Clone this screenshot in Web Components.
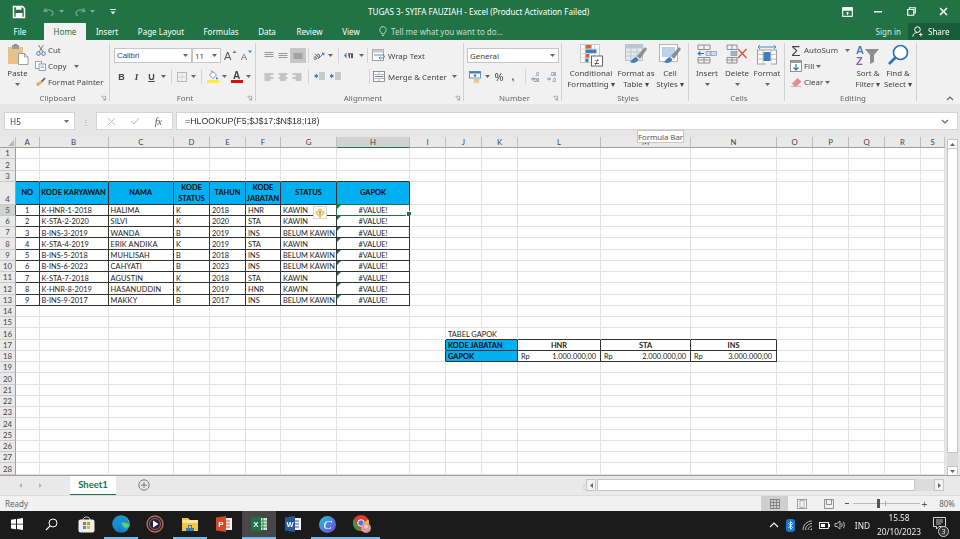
<!DOCTYPE html>
<html><head><meta charset="utf-8"><title>Excel</title>
<style>
html,body{margin:0;padding:0;width:960px;height:539px;overflow:hidden;background:#fff}
</style></head><body>
<x-app></x-app>
<script>
const UI='"Noto Sans","Open Sans",sans-serif';
const I={
save:[14,14,`<path d="M1.5 1.5h9l2 2v9h-11z" fill="none" stroke="#fff" stroke-width="1.5"/><rect x="4" y="1.5" width="5.5" height="3.2" fill="#fff"/><rect x="3.6" y="8" width="6.8" height="4.5" fill="#fff"/>`],
undo:[12,10,`<path d="M3 1L1 4l3.5 1M1.5 4c4-2 8-1 8.5 2 .2 1.500-1 2.500-2 3" fill="none" stroke="#6fa58a" stroke-width="1.3"/>`],
redo:[12,10,`<path d="M9 1l2 3-3.500 1M10.500 4c-4-2-8-1-8.500 2-.2 1.500 1 2.500 2 3" fill="none" stroke="#6fa58a" stroke-width="1.3"/>`],
caretG:[5,3,`<path d="M0 0h5L2.500 3z" fill="#7fb096"/>`],
custom:[6,6,`<rect x="0" y="0" width="6" height="1" fill="#dfeee6"/><path d="M.5 2.500h5L3 5.500z" fill="#dfeee6"/>`],
ribdisp:[11,10,`<rect x=".7" y=".7" width="9.600" height="8.600" fill="none" stroke="#fff" stroke-width="1.100"/><rect x=".7" y=".7" width="9.600" height="3" fill="#fff"/><path d="M5.500 8V5M4 6.500l1.500-1.500L7 6.500" fill="none" stroke="#fff"/>`],
min:[8,2,`<rect width="8" height="1.500" fill="#fff"/>`],
restore:[9,9,`<path d="M2.500 2.500V.7h5.800v5.300H6.700M.7 2.500h6v5.800h-6z" fill="none" stroke="#fff" stroke-width="1.100"/>`],
close:[9,9,`<path d="M1 1l7 7M8 1L1 8" stroke="#fff" stroke-width="1.500"/>`],
bulb:[8,11,`<path d="M4 .6a3.200 3.200 0 0 0-2 5.700c.6.600.6 1 .7 1.700h2.600c.1-.7.1-1.100.7-1.700A3.200 3.200 0 0 0 4 .6zM3 9.500h2" fill="none" stroke="#cfe3d8" stroke-width=".8"/>`],
user:[11,11,`<circle cx="5.500" cy="3.600" r="2.800" fill="none" stroke="#fff" stroke-width="1"/><path d="M.8 10.500c.6-3 2.200-4 4.700-4M7 8.500h3.500M8.700 6.800v3.500" fill="none" stroke="#fff"/>`],
paste:[22,21,`<rect x="1" y="3" width="15" height="17" fill="#e7c38c"/><rect x="5" y="1" width="7" height="4" fill="#9b9b9b"/><rect x="7" y="0" width="3" height="2" fill="#8b8b8b"/><path d="M11.500 9.500h6l3.500 3.500v7.500h-9.500z" fill="#fff" stroke="#8a8a8a" stroke-width=".8"/><path d="M17.500 9.500v3.500H21" fill="none" stroke="#8a8a8a" stroke-width=".8"/>`],
cut:[10,11,`<path d="M2.500 0l4.500 7M7.500 0L3 7" stroke="#7c7c7c" stroke-width="1"/><circle cx="2.500" cy="8.600" r="1.800" fill="none" stroke="#3f7fbf" stroke-width="1"/><circle cx="7.500" cy="8.600" r="1.800" fill="none" stroke="#3f7fbf" stroke-width="1"/>`],
copy:[11,10,`<rect x=".5" y=".5" width="6" height="7" fill="#fff" stroke="#8b8b8b" stroke-width=".8"/><rect x="4" y="3" width="6.500" height="6.500" fill="#fff" stroke="#5b8fc2" stroke-width=".8"/><path d="M5.500 5h3.500M5.500 6.500h3.500" stroke="#7aa4cc" stroke-width=".7"/>`],
brush:[11,10,`<path d="M6 4l3.500-3.500 1 1L7 5.500z" fill="#555"/><path d="M6 3.500L1 6.500l2 3 4.500-4z" fill="#e3b565"/><path d="M2 7l2 1" stroke="#b98a3d" stroke-width=".7"/>`],
caret:[5,3,`<path d="M0 0h5L2.500 3z" fill="#666"/>`],
launch:[5,5,`<path d="M.3.300h4.400v4.400" fill="none" stroke="#8a8a8a" stroke-width=".6"/><path d="M1 1l3 3M2.200 4h1.800V2.200" fill="none" stroke="#8a8a8a" stroke-width=".6"/>`],
growA:[13,11,`<text x="0" y="10" font-size="11" font-family="Liberation Sans" fill="#555">A</text><path d="M8.500 3L10.500.5 12.500 3z" fill="#3f7fbf"/>`],
shrinkA:[12,11,`<text x="1" y="10" font-size="9" font-family="Liberation Sans" fill="#555">A</text><path d="M8 .5h4L10 3z" fill="#3f7fbf"/>`],
border:[10,10,`<rect x=".5" y=".5" width="9" height="9" fill="none" stroke="#b9b9b9"/><path d="M5 .5v9M.5 5h9" stroke="#cfcfcf" stroke-width=".8"/>`],
fill:[12,13,`<path d="M6 1.500L2.500 5 6 8.500 9.500 5z" fill="#fff" stroke="#777" stroke-width=".8"/><path d="M4 .5l2 2" stroke="#555" stroke-width=".8"/><path d="M9.800 6.500c.6 1 1 1.500 1 2a.9.900 0 0 1-1.800 0c0-.5.400-1 .8-2z" fill="#3f7fbf"/><rect x="0" y="10" width="12" height="3" fill="#ffee33"/>`],
fcolor:[12,13,`<text x="2" y="9" font-size="10" font-family="Liberation Sans" font-weight="bold" fill="#444">A</text><rect x="0" y="10" width="12" height="3" fill="#dd0b0b"/>`],
atop:[10,7,`<path d="M.5 1h9M.5 3h9M.5 5h9" stroke="#8c8c8c" stroke-width=".9" transform="translate(0 -.5)"/>`],
amid:[10,7,`<path d="M.5 1.500h9M.5 3.500h9M.5 5.500h9" stroke="#8c8c8c" stroke-width=".9"/>`],
abot:[10,7,`<path d="M.5 2h9M.5 4h9M.5 6h9" stroke="#777" stroke-width=".9"/>`],
orient:[14,11,`<text x="1" y="9" font-size="6.500" font-weight="bold" font-family="Liberation Sans" fill="#666" transform="rotate(-40 4 7)">ab</text><path d="M6 9l5-5" stroke="#3f7fbf" stroke-width="1"/><path d="M9.500 2.500l3 .5-.5 3z" fill="#3f7fbf"/>`],
rtl:[10,7,`<path d="M0 3.500l2.500-3v6z" fill="#3f7fbf"/><path d="M4 1h5v5H7V2H6v4H5z" fill="#555" transform="translate(0 .2)"/>`],
wrap:[14,13,`<rect x=".5" y=".5" width="11" height="11" fill="#fff" stroke="#8b8b8b" stroke-width=".8"/><rect x=".5" y=".5" width="11" height="3" fill="#c9c9c9"/><path d="M2 6h9c2 0 2 3 0 3H7M8.500 7.500L7 9l1.500 1.500" fill="none" stroke="#3f7fbf" stroke-width=".9"/>`],
merge:[12,11,`<rect x=".5" y=".5" width="11" height="10" fill="#fff" stroke="#777" stroke-width=".8"/><path d="M.5 3.500h11M.5 7.500h11M6 .5v3M6 7.500v3" stroke="#999" stroke-width=".7"/><path d="M2 5.500h8" stroke="#3f7fbf" stroke-width="1"/>`],
lfa:[10,8,`<path d="M.5 1h9M.5 3h6M.5 5h9M.5 7h6" stroke="#8c8c8c" stroke-width=".9"/>`],
cfa:[10,8,`<path d="M.5 1h9M2 3h6M.5 5h9M2 7h6" stroke="#8c8c8c" stroke-width=".9"/>`],
rfa:[10,8,`<path d="M.5 1h9M3.500 3h6M.5 5h9M3.500 7h6" stroke="#8c8c8c" stroke-width=".9"/>`],
outd:[11,9,`<path d="M5 1h6M5 3h6M5 5h6M5 7h6" stroke="#999" stroke-width=".9"/><path d="M0 4l3-2.500V3h1v2H3v1.500z" fill="#3f7fbf"/>`],
ind:[11,9,`<path d="M5 1h6M5 3h6M5 5h6M5 7h6M0 8.500" stroke="#999" stroke-width=".9"/><path d="M4 4L1 1.500V3H0v2h1v1.500z" fill="#3f7fbf"/>`],
acct:[12,12,`<rect x=".5" y=".5" width="11" height="6.500" fill="#fff" stroke="#3f7fbf" stroke-width=".8"/><rect x=".5" y=".5" width="11" height="2" fill="#3f7fbf"/><circle cx="6" cy="4.500" r="1.300" fill="#3f7fbf"/><ellipse cx="7.500" cy="9" rx="3" ry="1.200" fill="#e7c38c"/><ellipse cx="7.500" cy="11" rx="3" ry="1" fill="#e7c38c"/>`],
incd:[11,10,`<text x="4" y="4.200" font-size="4.500" font-family="Liberation Sans" fill="#555">.0</text><text x="2" y="9.500" font-size="4.500" font-family="Liberation Sans" fill="#555">.00</text><path d="M0 3h3M2 1.500L3.500 3 2 4.500" fill="none" stroke="#3f7fbf" stroke-width=".8" transform="translate(0 4)"/>`],
decd:[11,10,`<text x="3" y="4.200" font-size="4.500" font-family="Liberation Sans" fill="#555">.00</text><text x="5" y="9.500" font-size="4.500" font-family="Liberation Sans" fill="#555">.0</text><path d="M0 3h3M2 1.500L3.500 3 2 4.500" fill="none" stroke="#3f7fbf" stroke-width=".8" transform="translate(0 4)"/>`],
cf:[23,23,`<rect x=".5" y=".5" width="19" height="18" fill="#fff" stroke="#bdbdbd" stroke-width=".8"/><path d="M5 .5v18M14.500.5v18M.5 5h19M.5 9.500h19M.5 14h19" stroke="#cfcfcf" stroke-width=".7"/><rect x="5.500" y="1" width="6" height="3.600" fill="#d4633a"/><rect x="5.500" y="5.500" width="11" height="3.600" fill="#3f7fbf"/><rect x="5.500" y="10" width="4" height="3.600" fill="#d4633a"/><rect x="5.500" y="14.500" width="3" height="3.600" fill="#3f7fbf"/><rect x="11.500" y="12" width="11" height="10" fill="#fff" stroke="#555" stroke-width=".9"/><text x="17" y="20.500" text-anchor="middle" font-size="9" font-family="Liberation Sans" fill="#333">≠</text>`],
ft:[23,23,`<rect x=".5" y=".5" width="17" height="16" fill="#e4e9ee" stroke="#aeb4ba" stroke-width=".8"/><rect x=".5" y=".5" width="17" height="3.500" fill="#b8c9da"/><path d="M6 .5v16M12 .5v16M.5 4h17M.5 8h17M.5 12h17" stroke="#b5bdc6" stroke-width=".7"/><path d="M15 15L22 5l-2-2-8 9z" fill="#8d8d8d"/><path d="M11 13c-2.500.5-4 3-6 5 3 2 7 1 8.500-2.500z" fill="#3f7fbf"/>`],
cs:[23,23,`<rect x=".5" y=".5" width="18" height="17" fill="#fff" stroke="#a6a6a6" stroke-width=".8"/><rect x="3" y="3" width="13" height="10" fill="#bcd2e8"/><path d="M15 15L22 5l-2-2-8 9z" fill="#8d8d8d"/><path d="M11 13c-2.500.5-4 3-6 5 3 2 7 1 8.500-2.500z" fill="#3f7fbf"/>`],
insert:[20,20,`<path d="M1 1h12v4.500H1zM7 1v4.500M1 13.500h12v5.500H1zM7 13.500v5.500M1 16h12" fill="none" stroke="#7a7a7a" stroke-width=".8"/><rect x="9" y="7.500" width="5" height="4" fill="#cfdce8" stroke="#7f97ad" stroke-width=".7"/><rect x="14" y="7.500" width="5.500" height="4" fill="#cfdce8" stroke="#7f97ad" stroke-width=".7"/><path d="M1 9.500h6M3.500 7.500L1.200 9.500l2.300 2" fill="none" stroke="#2d73b8" stroke-width="1.100"/>`],
del:[22,20,`<path d="M1 1h10v4.500H1zM6 1v4.500M1 13.500h10v5.500H1zM6 13.500v5.500M1 16h10" fill="none" stroke="#7a7a7a" stroke-width=".8"/><rect x="5" y="7.500" width="6" height="4" fill="#9cb7d1" stroke="#7f97ad" stroke-width=".7"/><path d="M12 5l8.500 9M20.500 5L12 14" stroke="#d55d3f" stroke-width="1.500"/>`],
fmt:[20,21,`<path d="M1 3h18M1 3l2-2M1 3l2 2M19 3l-2-2M19 3l-2 2" fill="none" stroke="#3f7fbf" stroke-width=".9"/><rect x=".5" y="6" width="19" height="14" fill="#fff" stroke="#8b8b8b" stroke-width=".8"/><path d="M6 6v14M14 6v14M.5 10.500h19M.5 15h19" stroke="#aaa" stroke-width=".7"/><rect x="6.500" y="8" width="7" height="9" fill="#3f7fbf"/><rect x="9" y="17.500" width="5" height="3.500" fill="#f1f1f1"/>`],
sum:[14,15,`<text x="7" y="13" text-anchor="middle" font-size="15" font-family="Liberation Sans" fill="#444">Σ</text>`],
fillb:[12,12,`<rect x=".5" y=".5" width="11" height="11" fill="#fff" stroke="#777" stroke-width=".8"/><rect x=".5" y=".5" width="11" height="2.500" fill="#999"/><path d="M6 4v6M3.500 7.500L6 10l2.500-2.500" fill="none" stroke="#2d73b8" stroke-width="1.200"/>`],
eraser:[11,10,`<path d="M1 6.500L6.500 1l4 3.500L6 9H3z" fill="#e78a91"/><path d="M0 9.500h10" stroke="#aaa" stroke-width=".8"/>`],
sort:[24,22,`<text x="0" y="10" font-size="11" font-family="Liberation Sans" font-weight="bold" fill="#3f7fbf">A</text><text x="0" y="21" font-size="11" font-family="Liberation Sans" font-weight="bold" fill="#8e5fb0">Z</text><path d="M9 5h14l-5 6v7l-4 2v-9z" fill="#8d8d8d"/>`],
find:[22,22,`<circle cx="13.500" cy="8.500" r="7" fill="#fff" stroke="#2d73b8" stroke-width="1.700"/><path d="M8.500 13.500L2 20" stroke="#2d73b8" stroke-width="2.600"/>`],
chev:[8,5,`<path d="M1 4l3-3 3 3" fill="none" stroke="#666" stroke-width="1.100"/>`],
chevd:[8,5,`<path d="M1 1l3 3 3-3" fill="none" stroke="#666" stroke-width="1.100"/>`],
x:[9,9,`<path d="M1 1l7 7M8 1L1 8" stroke="#b5b5b5" stroke-width=".9"/>`],
check:[10,8,`<path d="M1 4l3 3 5-6" fill="none" stroke="#b5b5b5" stroke-width=".9"/>`],
warn:[10,10,`<path d="M5 .5L9.500 5 5 9.500.5 5z" fill="#fbe29a" stroke="#c79a2d" stroke-width=".7"/><rect x="4.500" y="2.800" width="1" height="3" fill="#8a6a12"/><rect x="4.500" y="6.400" width="1" height="1" fill="#8a6a12"/>`],
larrow:[3,5,`<path d="M3 0v5L0 2.500z" fill="#b5b5b5"/>`],
rarrow:[3,5,`<path d="M0 0v5l3-2.500z" fill="#b5b5b5"/>`],
larrowd:[3,5,`<path d="M3 0v5L0 2.500z" fill="#666"/>`],
rarrowd:[3,5,`<path d="M0 0v5l3-2.500z" fill="#666"/>`],
uarrow:[5,3,`<path d="M0 3h5L2.500 0z" fill="#666"/>`],
plus:[12,12,`<circle cx="6" cy="6" r="5.200" fill="none" stroke="#6f6f6f" stroke-width=".9"/><path d="M3 6h6M6 3v6" stroke="#6f6f6f" stroke-width=".9"/>`],
vnormal:[10,10,`<rect x=".5" y=".5" width="9" height="9" fill="none" stroke="#6f6f6f" stroke-width=".8"/><path d="M3.500.5v9M6.500.5v9M.5 3.500h9M.5 6.500h9" stroke="#6f6f6f" stroke-width=".7"/>`],
vlayout:[10,10,`<rect x=".5" y=".5" width="9" height="9" fill="none" stroke="#8a8a8a" stroke-width=".8"/><rect x="3" y="1.500" width="4" height="7" fill="none" stroke="#9a9a9a" stroke-width=".7"/>`],
vbreak:[10,10,`<path d="M.5 9.500V.5h9v9zM2.500.5v5h5v-5" fill="none" stroke="#777" stroke-width=".8"/>`],
win:[12,12,`<path d="M0 1.700L5 1v4.700H0zM6 .9L12 0v5.700H6zM0 6.500h5v4.700l-5-.7zM6 6.500h6V12l-6-.9z" fill="#fff"/>`],
search:[13,13,`<circle cx="8" cy="5" r="4" fill="none" stroke="#fff" stroke-width="1"/><path d="M5 8l-4 4" stroke="#fff" stroke-width="1.100"/>`],
store:[17,17,`<path d="M5 4c0-4 7-4 7 0" fill="none" stroke="#ddd" stroke-width="1"/><rect x="0.500" y="3.500" width="16" height="13" rx="2" fill="#f2f0ea"/><rect x="5" y="6" width="3" height="3" fill="#e8563a"/><rect x="9" y="6" width="3" height="3" fill="#7dbb37"/><rect x="5" y="10" width="3" height="3" fill="#2d9be3"/><rect x="9" y="10" width="3" height="3" fill="#f5b800"/>`],
edge:[18,18,`<defs><linearGradient id="eg" x1="0" y1="1" x2="1" y2="0"><stop offset="0" stop-color="#0c59a4"/><stop offset=".55" stop-color="#1d9ad9"/><stop offset="1" stop-color="#54c76a"/></linearGradient></defs><circle cx="9" cy="9" r="8.800" fill="url(#eg)"/><path d="M17 10c-1 3-5 3-6 1.500-1.500-2 0-4-2-4-4 0-5 5-2 8-3-.5-6-3-6.500-6C2 4 6 1 9.500 1c4 0 7.500 4 7.500 9z" fill="#1a8ed0"/><path d="M17.500 10.500c-.5 2-4 3-6 1.500s-.5-3.500-2-4.500c3 0 8 .5 8 3z" fill="#5bd26f"/>`],
media:[18,18,`<circle cx="9" cy="9" r="8" fill="#26232c" stroke="#c8713f" stroke-width="1.300"/><circle cx="9" cy="9" r="5.500" fill="none" stroke="#8b5ea8" stroke-width="1"/><path d="M7 5.500v7l5.500-3.500z" fill="#fff"/>`],
folder:[16,14,`<path d="M0 1h6l2 2h8v11H0z" fill="#f4c542"/><rect x="0" y="3" width="16" height="3" fill="#fbe49a"/><path d="M4 11h8v3H4z" fill="#2a7fc4"/><rect x="6.500" y="8.500" width="3" height="3" fill="none" stroke="#2a7fc4" stroke-width="1"/>`],
ppt:[16,16,`<rect x="7" y="2" width="9" height="12" fill="#f4f4f4"/><path d="M9 5h5M9 8h5M9 11h5" stroke="#d0593b"/><path d="M0 1.500L10 0v16L0 14.500z" fill="#d04a25"/><text x="5" y="11" text-anchor="middle" font-size="8" font-weight="bold" font-family="Liberation Sans" fill="#fff">P</text>`],
xl:[16,16,`<rect x="7" y="2" width="9" height="12" fill="#cfe4d6"/><path d="M12 2v12M7 5h9M7 8h9M7 11h9" stroke="#217346" stroke-width=".8"/><path d="M0 1.500L10 0v16L0 14.500z" fill="#1e7145"/><text x="5" y="11" text-anchor="middle" font-size="8" font-weight="bold" font-family="Liberation Sans" fill="#fff">X</text>`],
wd:[16,16,`<rect x="7" y="2" width="9" height="12" fill="#f0f3fa"/><path d="M9 5h5M9 8h5M9 11h5" stroke="#3a5fa8"/><path d="M0 1.500L10 0v16L0 14.500z" fill="#2a5699"/><text x="5" y="11" text-anchor="middle" font-size="7.500" font-weight="bold" font-family="Liberation Sans" fill="#fff">W</text>`],
canva:[17,17,`<defs><linearGradient id="cg" x1="0" y1="0" x2="1" y2="1"><stop offset="0" stop-color="#19c8d8"/><stop offset="1" stop-color="#7a3fe0"/></linearGradient></defs><circle cx="8.500" cy="8.500" r="8.500" fill="url(#cg)"/><text x="8.500" y="13" text-anchor="middle" font-size="13" font-style="italic" font-family="Liberation Serif" fill="#fff">C</text>`],
chrome:[18,18,`<circle cx="8" cy="8" r="8" fill="#e33b2e"/><path d="M1 4l3.500 8L8 16a8 8 0 0 1-7-12z" fill="#2f9e44"/><path d="M15 4a8 8 0 0 1-7 12l3.500-8z" fill="#f6c01e"/><circle cx="8" cy="8" r="3.300" fill="#3d82d8" stroke="#fff"/><circle cx="13" cy="13" r="5" fill="#d99a9e"/><circle cx="13" cy="11.500" r="2" fill="#f0c8b8"/>`],
tup:[10,6,`<path d="M1 5l4-4 4 4" fill="none" stroke="#fff" stroke-width="1.100"/>`],
bt:[9,13,`<rect width="9" height="13" rx="3" fill="#1479d4"/><path d="M2.500 4l4 4.500-2 2V2.500l2 2-4 4.500" fill="none" stroke="#fff" stroke-width=".8"/>`],
wifi:[11,11,`<path d="M1 10c0-5 4-9 9-9M3.500 10c0-3.500 3-6.500 6.500-6.500M6 10c0-2 2-4 4-4" fill="none" stroke="#cfcfcf" stroke-width=".9"/><path d="M8 10l2-2v2z" fill="#cfcfcf"/>`],
batt:[11,7,`<rect x=".5" y=".5" width="9" height="6" fill="none" stroke="#fff" stroke-width=".9"/><rect x="2" y="2" width="4" height="3" fill="#fff"/><rect x="10" y="2" width="1" height="3" fill="#fff"/>`],
vol:[11,10,`<path d="M0 3.500h2L5 1v8L2 6.500H0z" fill="none" stroke="#ddd" stroke-width=".8"/><path d="M6.500 3c.8 1 .8 3 0 4M8.300 1.800c1.400 1.800 1.400 4.600 0 6.400" fill="none" stroke="#ddd" stroke-width=".8"/>`],
note:[16,16,`<path d="M.5.500h12v9H6l-2.500 2.500V9.500h-3z" fill="none" stroke="#eee" stroke-width=".9"/><path d="M3 3h7M3 5h7M3 7h5" stroke="#eee" stroke-width=".8"/>`],
};
function def(name,css,html,init){
  customElements.define(name,class extends HTMLElement{
    constructor(){super();const r=this.attachShadow({mode:'open'});r.innerHTML=`<style>${css}</style>${typeof html==='function'?html(this):html}`;}
    connectedCallback(){ if(init) init(this); }
  });
}
def('x-icon',':host{display:inline-flex;line-height:0;flex:none}svg{display:block;overflow:visible}','',h=>{
  if(h.shadowRoot.querySelector('svg'))return;
  const d=I[h.getAttribute('name')],s=+(h.getAttribute('s')||1);
  h.shadowRoot.innerHTML+=`<svg xmlns="http://www.w3.org/2000/svg" width="${d[0]*s}" height="${d[1]*s}" viewBox="0 0 ${d[0]} ${d[1]}">${d[2]}</svg>`;
});
def('x-t',':host{display:inline-flex;align-items:center;justify-content:center;height:15px;flex:none;white-space:nowrap;box-sizing:border-box}:host([hi]){background:#c6c6c6}','<slot></slot>',h=>{
  if(h.hasAttribute('w'))h.style.width=h.getAttribute('w')+'px';
  if(h.hasAttribute('ml'))h.style.marginLeft=h.getAttribute('ml')+'px';
});
def('x-sep',':host{display:block;flex:none;width:1px;height:15px;background:#d4d4d4}','',h=>{
  h.style.marginLeft=(h.getAttribute('l')||0)+'px';h.style.marginRight=(h.getAttribute('r')||0)+'px';
});
def('x-row',':host{display:flex;align-items:center;height:15px}','<slot></slot>');
def('x-line',':host{display:flex;align-items:center;height:16px;white-space:nowrap}','<slot></slot>');
def('x-select',`:host{display:flex;align-items:center;justify-content:space-between;height:15px;background:#fff;border:1px solid #c6c6c6;box-sizing:border-box;padding:0 3px 0 2px;flex:none;color:#444}`,'<slot></slot><x-icon name="caret"></x-icon>',h=>{h.style.width=h.getAttribute('w')+'px'});
def('x-big',`:host{display:flex;flex-direction:column;align-items:center;flex:none;padding-top:4px;box-sizing:border-box;line-height:11px;white-space:nowrap;text-align:center}
.i{height:24px;display:flex;align-items:flex-start;justify-content:center}
.c{height:11px;display:flex;align-items:center}`,`<div class="i"><slot name="i"></slot></div><div><slot></slot></div><slot name="c"></slot>`,h=>{h.style.width=h.getAttribute('w')+'px'});
def('x-tab',`:host{display:flex;align-items:center;justify-content:center;flex:none;height:17px;color:#fff;box-sizing:border-box}
:host([on]){background:#f1f1f1;color:#217346}`,'<slot></slot>',h=>{h.style.width=h.getAttribute('w')+'px';h.style.marginLeft=(h.getAttribute('ml')||0)+'px'});
def('x-group',`:host{display:flex;flex-direction:column;height:64px;flex:none;box-sizing:border-box;position:relative;
background:linear-gradient(#d0d0d0,#d0d0d0) right 0 top 3px/1px 58px no-repeat}
.b{flex:1;display:flex;flex-direction:column;min-height:0}
.l{height:11px;line-height:11px;text-align:center;margin-bottom:0;color:#666}
.k{position:absolute;right:4px;bottom:3px}`,h=>`<div class="b"><slot></slot></div><div class="l"><slot name="label"></slot></div>${h.hasAttribute('k')?'<x-icon class="k" name="launch"></x-icon>':''}`,h=>{
  h.style.width=h.getAttribute('w')+'px';h.style.paddingLeft=(h.getAttribute('p')||0)+'px';
});
def('x-titlebar',`:host{display:flex;align-items:center;height:23px;background:#217346;color:#fff;font:8.1px ${UI}}
.q{display:flex;align-items:center;width:368px;flex:none}
.c{margin-left:auto;display:flex;align-items:center}`,`<div class="q">
<x-t w="12" ml="13"><x-icon name="save"></x-icon></x-t><x-t w="12" ml="18"><x-icon name="undo"></x-icon></x-t><x-t w="8" ml="2"><x-icon name="caretG"></x-icon></x-t>
<x-t w="12" ml="9"><x-icon name="redo"></x-icon></x-t><x-t w="8" ml="2"><x-icon name="caretG"></x-icon></x-t><x-t w="8" ml="13"><x-icon name="custom"></x-icon></x-t></div>
<span>TUGAS 3- SYIFA FAUZIAH - Excel (Product Activation Failed)</span>
<div class="c"><x-t w="30"><x-icon name="ribdisp"></x-icon></x-t><x-t w="32"><x-icon name="min"></x-icon></x-t><x-t w="34"><x-icon name="restore"></x-icon></x-t><x-t w="30"><x-icon name="close"></x-icon></x-t><x-t w="2"></x-t></div>`);
def('x-tabs',`:host{display:flex;height:17px;background:#217346;font:8px ${UI};color:#fff;align-items:center}
.tell{display:flex;align-items:center;gap:4px;margin-left:10px;color:#c6dccf}
.r{margin-left:auto;display:flex;align-items:center;height:17px}
.share{display:flex;align-items:center;gap:5px;width:52px;height:17px;background:#1a5c38;box-sizing:border-box;padding-left:4px;margin-left:7px}`,`<x-tab w="40">File</x-tab><x-tab w="42" ml="4" on>Home</x-tab><x-tab w="42">Insert</x-tab><x-tab w="66">Page Layout</x-tab><x-tab w="54">Formulas</x-tab><x-tab w="38">Data</x-tab><x-tab w="47">Review</x-tab><x-tab w="36">View</x-tab>
<div class="tell"><x-icon name="bulb"></x-icon><span>Tell me what you want to do...</span></div>
<div class="r"><span style="color:#dbe9e1">Sign in</span><div class="share"><x-icon name="user"></x-icon><span>Share</span></div></div>`);
def('x-ribbon',`:host{display:flex;height:64px;background:#f1f1f1;font:7.9px ${UI};color:#444;position:relative}
.col{display:flex;flex-direction:column}
.rows{display:flex;flex-direction:column;gap:6px;padding-top:8px}
.f{display:flex;flex:none}
.top{padding-top:2px}
.col2{position:absolute;right:6px;bottom:3px}`,`
<x-group w="110" p="5" k><div class="f"><x-big w="25"><x-icon slot="i" name="paste"></x-icon>Paste<x-t slot="c" style="height:11px"><x-icon name="caret"></x-icon></x-t></x-big>
<div class="col top" style="margin-left:3px"><x-line><x-t w="15"><x-icon name="cut"></x-icon></x-t>Cut</x-line><x-line><x-t w="15"><x-icon name="copy"></x-icon></x-t>Copy<x-t w="10" ml="5"><x-icon name="caret"></x-icon></x-t></x-line><x-line><x-t w="15"><x-icon name="brush"></x-icon></x-t>Format Painter</x-line></div></div><span slot="label">Clipboard</span></x-group>

<x-group w="146" p="4" k><div class="rows"><x-row><x-select w="78" style="font-family:'Liberation Sans'">Calibri</x-select><x-select w="29">11</x-select><x-t w="16" ml="1"><x-icon name="growA"></x-icon></x-t><x-t w="15"><x-icon name="shrinkA"></x-icon></x-t></x-row>
<x-row><x-t w="15"><b style="font:bold 9px 'Liberation Sans'">B</b></x-t><x-t w="15"><i style="font:italic bold 9px 'Liberation Serif'">I</i></x-t><x-t w="15"><u style="font:bold 9px 'Liberation Sans'">U</u></x-t><x-t w="9"><x-icon name="caret"></x-icon></x-t><x-sep l="3" r="3"></x-sep><x-t w="14"><x-icon name="border"></x-icon></x-t><x-t w="9"><x-icon name="caret"></x-icon></x-t><x-sep l="3" r="3"></x-sep><x-t w="15"><x-icon name="fill"></x-icon></x-t><x-t w="9"><x-icon name="caret"></x-icon></x-t><x-t w="16"><x-icon name="fcolor"></x-icon></x-t><x-t w="7"><x-icon name="caret"></x-icon></x-t></x-row></div><span slot="label">Font</span></x-group>

<x-group w="208" p="6" k><div class="rows"><x-row><x-t w="14"><x-icon name="atop"></x-icon></x-t><x-t w="14"><x-icon name="amid"></x-icon></x-t><x-t w="16" hi><x-icon name="abot"></x-icon></x-t><x-sep l="2" r="2"></x-sep><x-t w="16"><x-icon name="orient"></x-icon></x-t><x-t w="6"><x-icon name="caret"></x-icon></x-t><x-sep l="4.500" r="4.500"></x-sep><x-t w="12"><x-icon name="rtl"></x-icon></x-t><x-t w="12"><x-icon name="caret"></x-icon></x-t><x-sep l="0" r="4"></x-sep><x-t w="14"><x-icon name="wrap"></x-icon></x-t><x-t ml="2">Wrap Text</x-t></x-row>
<x-row><x-t w="14"><x-icon name="lfa"></x-icon></x-t><x-t w="14"><x-icon name="cfa"></x-icon></x-t><x-t w="14"><x-icon name="rfa"></x-icon></x-t><x-sep l="4" r="2"></x-sep><x-t w="16"><x-icon name="outd"></x-icon></x-t><x-t w="16"><x-icon name="ind"></x-icon></x-t><x-sep l="25.500" r="2.500"></x-sep><x-t w="14"><x-icon name="merge"></x-icon></x-t><x-t ml="2">Merge &amp; Center</x-t><x-t w="8" ml="4"><x-icon name="caret"></x-icon></x-t></x-row></div><span slot="label">Alignment</span></x-group>

<x-group w="98" p="3" k><div class="rows"><x-row><x-select w="92">General</x-select></x-row>
<x-row><x-t w="16"><x-icon name="acct"></x-icon></x-t><x-t w="8"><x-icon name="caret"></x-icon></x-t><x-t w="16" style="font-size:11px">%</x-t><x-t w="12" style="font:bold 9px 'Liberation Sans'">,</x-t><x-sep l="5.500" r="5.500"></x-sep><x-t w="11"><x-icon name="incd"></x-icon></x-t><x-t w="16" ml="2"><x-icon name="decd"></x-icon></x-t></x-row></div><span slot="label">Number</span></x-group>

<x-group w="127" p="5"><div class="f"><x-big w="48"><x-icon slot="i" name="cf"></x-icon>Conditional<br>Formatting ▾</x-big><x-big w="42"><x-icon slot="i" name="ft"></x-icon>Format as<br>Table ▾</x-big><x-big w="26"><x-icon slot="i" name="cs"></x-icon>Cell<br>Styles ▾</x-big></div><span slot="label">Styles</span></x-group>

<x-group w="96" p="4"><div class="f"><x-big w="28"><x-icon slot="i" name="insert"></x-icon>Insert<x-t slot="c" style="height:11px"><x-icon name="caret"></x-icon></x-t></x-big><x-big w="32"><x-icon slot="i" name="del"></x-icon>Delete<x-t slot="c" style="height:11px"><x-icon name="caret"></x-icon></x-t></x-big><x-big w="28"><x-icon slot="i" name="fmt"></x-icon>Format<x-t slot="c" style="height:11px"><x-icon name="caret"></x-icon></x-t></x-big></div><span slot="label">Cells</span></x-group>

<x-group w="132" p="4"><div class="f"><div class="col top" style="width:64px;flex:none"><x-line><x-t w="14"><x-icon name="sum"></x-icon></x-t><x-t ml="1">AutoSum</x-t><x-t w="10" ml="4"><x-icon name="caret"></x-icon></x-t></x-line><x-line><x-t w="14"><x-icon name="fillb"></x-icon></x-t><x-t ml="1">Fill</x-t><x-t w="8"><x-icon name="caret"></x-icon></x-t></x-line><x-line><x-t w="14"><x-icon name="eraser"></x-icon></x-t><x-t ml="1">Clear</x-t><x-t w="8"><x-icon name="caret"></x-icon></x-t></x-line></div>
<x-big w="30"><x-icon slot="i" name="sort"></x-icon>Sort &amp;<br>Filter ▾</x-big><x-big w="30"><x-icon slot="i" name="find"></x-icon>Find &amp;<br>Select ▾</x-big></div><span slot="label">Editing</span></x-group>
<x-icon class="col2" name="chev"></x-icon>`);
def('x-formula',`:host{display:flex;height:33px;box-sizing:border-box;padding-top:8px;background:#e6e6e6;font:8.3px ${UI};color:#444}
.box{height:18px;background:#fff;border:1px solid #d4d4d4;box-sizing:border-box;display:flex;align-items:center}
.n{margin-left:4px;width:71px;justify-content:space-between;padding:0 5px}
.g{width:21px;display:flex;justify-content:center;align-items:center;height:18px;color:#999}
.b{width:77px;justify-content:space-around;padding:0 3px}
.f{margin-left:3px;width:782px;padding:0 8px;justify-content:space-between;color:#333;font:8.850px "Liberation Sans",sans-serif}
.fx{font:italic 10px "Liberation Serif",serif;color:#555}`,`<div class="box n"><span>H5</span><x-icon name="caret"></x-icon></div><div class="g">⋮</div><div class="box b"><x-icon name="x"></x-icon><x-icon name="check"></x-icon><span class="fx">fx</span></div><div class="box f"><span>=HLOOKUP(F5;$J$17:$N$18;I18)</span><x-icon name="chevd"></x-icon></div>`);
const COLS=[16,23.5,69,65.5,36,36,35,56,73,36,36,36,83,90,86,36,36,36,36,24];
const L=' ABCDEFGHIJKLMNOPQRS';
const DATA=[
['1','K-HNR-1-2018','HALIMA','K','2018','HNR','KAWIN'],
['2','K-STA-2-2020','SILVI','K','2020','STA','KAWIN'],
['3','B-INS-3-2019','WANDA','B','2019','INS','BELUM KAWIN'],
['4','K-STA-4-2019','ERIK ANDIKA','K','2019','STA','KAWIN'],
['5','B-INS-5-2018','MUHLISAH','B','2018','INS','BELUM KAWIN'],
['6','B-INS-6-2023','CAHYATI','B','2023','INS','BELUM KAWIN'],
['7','K-STA-7-2018','AGUSTIN','K','2018','STA','KAWIN'],
['8','K-HNR-8-2019','HASANUDDIN','K','2019','HNR','KAWIN'],
['9','B-INS-9-2017','MAKKY','B','2017','INS','BELUM KAWIN']];
const HEAD=['NO','KODE KARYAWAN','NAMA','KODE<br>STATUS','TAHUN','KODE<br>JABATAN','STATUS','GAPOK'];
def('x-grid',`:host{display:grid;flex:none;width:945px;height:337.500px;position:relative;background:#fff;font:7.400px Lato,"Liberation Sans",sans-serif;color:#1c1c1c;overflow:hidden;
grid-template-columns:${COLS.map(c=>c+'px').join(' ')};grid-template-rows:11px repeat(3,11.250px) 22.750px repeat(24,11.250px)}
.c{box-sizing:border-box;border-right:1px solid #e2e2e2;border-bottom:1px solid #e2e2e2;display:flex;align-items:center;padding:2px 2px 0;white-space:nowrap;min-width:0;line-height:9px;position:relative;overflow:visible}
.ch,.rh{background:#e9e9e9;color:#444;justify-content:center;border-right:1px solid #bdbdbd;border-bottom:1px solid #bdbdbd;padding:0;font-size:7.800px;line-height:10px}
.ch{border-bottom:1px solid #9e9e9e}
.rh{border-right:1px solid #9e9e9e;border-bottom-color:#c9c9c9;align-items:flex-end}
.on{background:#d2d2d2;color:#217346}
.ch.on{border-bottom:1.500px solid #217346;color:#444}
.rh.on{border-right:1.500px solid #217346}
.ctr{justify-content:center;text-align:center}
.nm{letter-spacing:.12px}
.hd{background:#00b0f0;font-weight:bold;color:#0a0a0a;justify-content:center;text-align:center;padding:0;line-height:11px}
.blue{background:#00b0f0;font-weight:bold;color:#0a0a0a}
.bold{font-weight:bold}
.sb{justify-content:space-between;padding:2px 4px 0 3px}
.dr{border-right:1px solid #333}.db{border-bottom:1px solid #333}
.tri{position:absolute;left:0;top:0;width:0;height:0;border-top:4px solid #217346;border-right:4px solid transparent}
.sel{position:absolute;left:-1px;top:-1px;right:-1px;bottom:-1px;border:1.500px solid #217346;pointer-events:none}
.hdl{position:absolute;right:-2.500px;bottom:-2.500px;width:4px;height:4px;background:#217346;border:.5px solid #fff}
.warn{position:absolute;right:9px;top:1.500px;width:14px;height:13px;background:#fff;border:1px solid #d8d8d8;box-sizing:border-box;display:flex;align-items:center;justify-content:center;z-index:2}
.corner{width:0;height:0;border-bottom:6px solid #b5b5b5;border-left:6px solid transparent;position:absolute;right:1px;bottom:1px}`,'',h=>{
  if(h.shadowRoot.querySelector('.c'))return;
  let o='';
  const inT=(r,c)=>(r>=4&&r<=13&&c>=1&&c<=8)||(r>=17&&r<=18&&c>=10&&c<=14);
  const cell=(r,c,cls,txt,sp)=>{
    let k='c '+cls;
    if(r>0&&c>0){ if(inT(r,c)||inT(r,c+1))k+=' dr'; if(inT(r,c)||inT(r+1,c))k+=' db'; }
    return `<div class="${k}"${sp?` style="grid-column:span ${sp}"`:''}>${txt||''}</div>`;
  };
  for(let r=0;r<=28;r++){
    for(let c=0;c<COLS.length;c++){
      if(r===0){ o+=c===0?`<div class="c ch"><span class="corner"></span></div>`:`<div class="c ch${c===8?' on':''}">${L[c]}</div>`; continue; }
      if(c===0){ o+=`<div class="c rh${r===5?' on':''}">${r}</div>`; continue; }
      let cls='',t='';
      if(r===4&&c<=8){cls='hd';t=HEAD[c-1];}
      else if(r>=5&&r<=13&&c<=7){t=DATA[r-5][c-1]; if(c===1)cls='ctr'; if(c===3)cls='nm';
        if(r===5&&c===7)t+=`<span class="warn"><x-icon name="warn"></x-icon></span>`;}
      else if(r>=5&&r<=13&&c===8){cls='ctr';t='#VALUE!<span class="tri"></span>'+(r===5?'<span class="sel"><span class="hdl"></span></span>':'');}
      else if(r===16&&c===10){t='TABEL GAPOK';}
      else if(r===17&&c===10){o+=cell(r,11,'blue','KODE JABATAN',2);c++;continue;}
      else if(r===18&&c===10){o+=cell(r,11,'blue','GAPOK',2);c++;continue;}
      else if(r===17&&c>=12&&c<=14){cls='ctr bold';t=['HNR','STA','INS'][c-12];}
      else if(r===18&&c>=12&&c<=14){cls='sb';t=`<span>Rp</span><span>${['1.000.000,00','2.000.000,00','3.000.000,00'][c-12]}</span>`;}
      o+=cell(r,c,cls,t);
    }
  }
  h.shadowRoot.innerHTML+=o;
});
def('x-vscroll',`:host{display:flex;flex-direction:column;flex:none;width:15px;height:337.500px;background:#e6e6e6;box-sizing:border-box;padding:2px 2px 0 2px}
.btn{height:10px;flex:none;background:#fff;border:1px solid #c6c6c6;box-sizing:border-box;display:flex;align-items:center;justify-content:center}
.th{height:305px;flex:none;background:#fff;border:1px solid #c6c6c6;box-sizing:border-box;margin-top:-1px}
.tr{height:13px;flex:none;background:#dcdcdc}`,`<div class="btn"><x-icon name="uarrow"></x-icon></div><div class="th"></div><div class="tr"></div><div class="btn"><x-icon name="caret"></x-icon></div>`);
def('x-sheet',':host{display:flex;height:337.500px;background:#e6e6e6}','<x-grid></x-grid><x-vscroll></x-vscroll>');
def('x-sheettabs',`:host{display:flex;align-items:center;height:20.500px;background:#e9e9e9;font:8px ${UI};color:#666;border-top:1px solid #9e9e9e;box-sizing:border-box}
.tab{width:46px;height:100%;background:#fff;border-bottom:1.500px solid #217346;box-sizing:border-box;display:flex;align-items:center;justify-content:center;color:#217346;font-weight:bold;font-family:Lato,sans-serif;font-size:9.500px;margin-left:27px}
.btn{width:10px;height:12px;background:#f1f1f1;border:1px solid #c6c6c6;box-sizing:border-box;display:flex;align-items:center;justify-content:center;flex:none}
.th{width:318px;height:12px;background:#fff;border:1px solid #c6c6c6;box-sizing:border-box;margin-left:1px;flex:none}
.tr{width:19px;height:12px;background:#dcdcdc;flex:none}`,`<x-t w="6" ml="17"><x-icon name="larrow"></x-icon></x-t><x-t w="6" ml="14"><x-icon name="rarrow"></x-icon></x-t><div class="tab">Sheet1</div><x-t w="12" ml="22"><x-icon name="plus"></x-icon></x-t><x-t w="4" ml="432" style="color:#aaa">⋮</x-t><div class="btn"><x-icon name="larrowd"></x-icon></div><div class="th"></div><div class="tr"></div><div class="btn"><x-icon name="rarrowd"></x-icon></div>`);
def('x-status',`:host{display:flex;align-items:center;height:16px;background:#f1f1f1;font:8px ${UI};color:#666;border-top:1px solid #dcdcdc;box-sizing:border-box}
.v{display:flex;align-items:center;justify-content:center;width:27px;height:16px;flex:none}
.on{background:#cfcfcf}
.sl{position:relative;width:67px;height:1px;background:#bcbcbc;margin:0 1px 0 4px}
.th{position:absolute;left:24px;top:-4px;width:3px;height:9px;background:#555}
.ti{position:absolute;left:32px;top:-2px;width:1px;height:5px;background:#aaa}`,`<span style="margin-left:5px">Ready</span><div style="margin-left:auto;display:flex;align-items:center"><div class="v on"><x-icon name="vnormal"></x-icon></div><div class="v"><x-icon name="vlayout"></x-icon></div><div class="v"><x-icon name="vbreak"></x-icon></div><span style="width:4px;height:1px;background:#555;margin-left:3px"></span><div class="sl"><span class="th"></span><span class="ti"></span></div><span style="font-size:10px;color:#555;line-height:10px">+</span><span style="margin:0 5px 0 12px">80%</span></div>`);
def('x-taskitem',`:host{display:flex;align-items:center;justify-content:center;width:34.500px;height:28px;flex:none;box-sizing:border-box;border-bottom:2px solid transparent}
:host([run]){border-bottom-color:#76b9ed;background-clip:padding-box}
:host([act]){background:#474747}`,'<slot></slot>');
def('x-taskbar',`:host{display:flex;align-items:center;height:28px;background:#1b1b1b;font:8.3px ${UI};color:#eee;position:relative}
.tray{margin-left:auto;display:flex;align-items:center;height:28px}
.ck{display:flex;flex-direction:column;align-items:center;line-height:14px;width:46px;margin-left:6px;text-align:center}
.badge{position:absolute;right:11px;bottom:2px;width:11px;height:11px;border-radius:50%;background:#333;border:1px solid #ccc;box-sizing:border-box;display:flex;align-items:center;justify-content:center;font-size:7px}
.nt{position:relative;width:38px;display:flex;justify-content:center;height:28px;align-items:center;box-sizing:border-box}`,`<x-taskitem><x-icon name="win"></x-icon></x-taskitem><x-taskitem><x-icon name="search"></x-icon></x-taskitem><x-taskitem><x-icon name="store"></x-icon></x-taskitem><x-taskitem run><x-icon name="edge"></x-icon></x-taskitem><x-taskitem><x-icon name="media"></x-icon></x-taskitem><x-taskitem run><x-icon name="folder"></x-icon></x-taskitem><x-taskitem><x-icon name="ppt"></x-icon></x-taskitem><x-taskitem run act><x-icon name="xl"></x-icon></x-taskitem><x-taskitem><x-icon name="wd"></x-icon></x-taskitem><x-taskitem run><x-icon name="canva"></x-icon></x-taskitem><x-taskitem run><x-icon name="chrome"></x-icon></x-taskitem>
<div class="tray"><x-t w="16"><x-icon name="tup"></x-icon></x-t><x-t w="17"><x-icon name="bt"></x-icon></x-t><x-t w="18"><x-icon name="wifi"></x-icon></x-t><x-t w="16"><x-icon name="batt"></x-icon></x-t><x-t w="15"><x-icon name="vol"></x-icon></x-t><x-t ml="7">IND</x-t><div class="ck"><span>15.58</span><span>20/10/2023</span></div><div class="nt"><x-icon name="note"></x-icon><span class="badge">3</span></div></div>`);
def('x-tooltip',`:host{position:absolute;left:637px;top:130px;width:47px;height:13px;background:#fff;border:1px solid #c6c6c6;box-sizing:border-box;font:7.800px ${UI};color:#555;display:flex;align-items:center;justify-content:center;white-space:nowrap;z-index:5}`,'<slot></slot>');
def('x-app',`:host{display:flex;flex-direction:column;width:960px;height:539px;overflow:hidden;position:relative;filter:blur(.25px)}`,`<x-titlebar></x-titlebar><x-tabs></x-tabs><x-ribbon></x-ribbon><x-formula></x-formula><x-sheet></x-sheet><x-sheettabs></x-sheettabs><x-status></x-status><x-taskbar></x-taskbar><x-tooltip>Formula Bar</x-tooltip>`);
</script>
</body></html>
